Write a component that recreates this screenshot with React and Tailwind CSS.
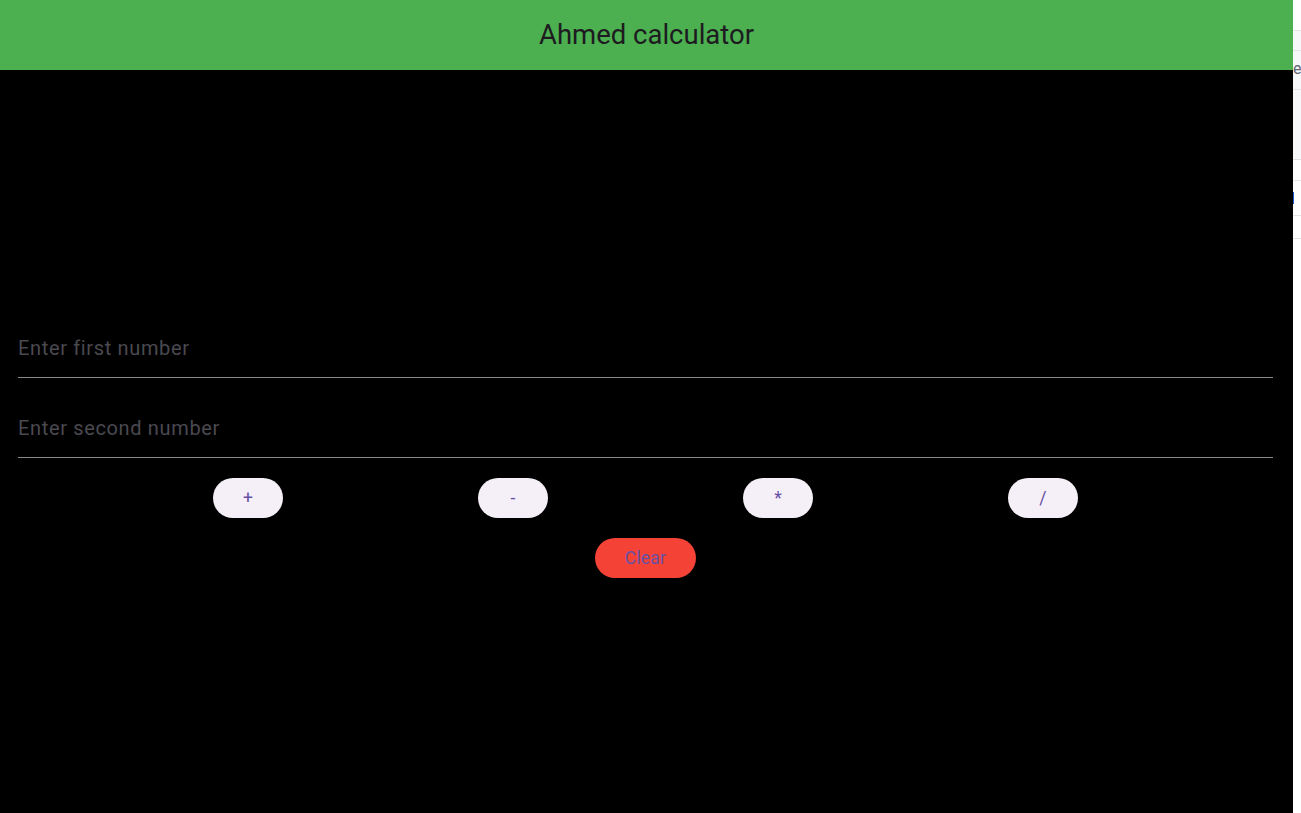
import React from "react";

export default function App() {
  const ops = ["+", "-", "*", "/"];
  return (
    <div className="flex h-[813px] w-[1301px] overflow-hidden" style={{ fontFamily: "Roboto, 'Noto Sans', sans-serif" }}>
      <div className="flex h-full w-[1293px] flex-col bg-black">
        <header className="flex h-[70px] w-full items-center justify-center bg-[#4caf50]">
          <h1 className="text-[27.5px] font-normal text-[#1d1b20]">Ahmed calculator</h1>
        </header>
        <main className="flex flex-col gap-[20px] pl-[18px] pr-[20px] pt-[248px]">
          <div className="flex h-[60px] items-center border-b border-[#8a8a8e]">
            <span className="text-[20px] tracking-[0.65px] text-[#4a4950]">Enter first number</span>
          </div>
          <div className="flex h-[60px] items-center border-b border-[#8a8a8e]">
            <span className="text-[20px] tracking-[0.65px] text-[#4a4950]">Enter second number</span>
          </div>
          <div className="flex justify-evenly">
            {ops.map((o) => (
              <button
                key={o}
                className="flex h-[40px] w-[70px] items-center justify-center rounded-full bg-[#f5eff7] pt-[1px] text-[17.5px] tracking-[0.2px] text-[#6750a4]"
              >
                {o}
              </button>
            ))}
          </div>
          <div className="flex justify-center">
            <button className="flex h-[40px] w-[101px] items-center justify-center rounded-full bg-[#f44336] pt-[1px] text-[17.5px] tracking-[0.2px] text-[#6750a4]">
              Clear
            </button>
          </div>
        </main>
      </div>
      <div className="flex h-full w-[8px] flex-col bg-white">
        <div className="h-[30px] bg-white" />
        <div className="h-[20px] border-t border-[#e3e5e8] bg-[#f7f8fa]" />
        <div className="h-[39px] border-t border-[#e3e5e8] bg-[#f7f8fa] pt-[10px] text-[16px] leading-none text-[#5f6673]">e</div>
        <div className="h-[70px] border-t border-[#e3e5e8] bg-[#f7f8fa]" />
        <div className="h-[21px] border-t border-[#dfe1e5] bg-white" />
        <div className="flex h-[35px] items-start border-t border-[#e3e5e8] bg-white pt-[11px]">
          <div className="h-[12px] w-[1px] bg-[#1a56c8]" />
        </div>
        <div className="h-[23px] border-t border-[#e3e5e8] bg-white" />
        <div className="flex-1 border-t border-[#e3e5e8] bg-white" />
      </div>
    </div>
  );
}
